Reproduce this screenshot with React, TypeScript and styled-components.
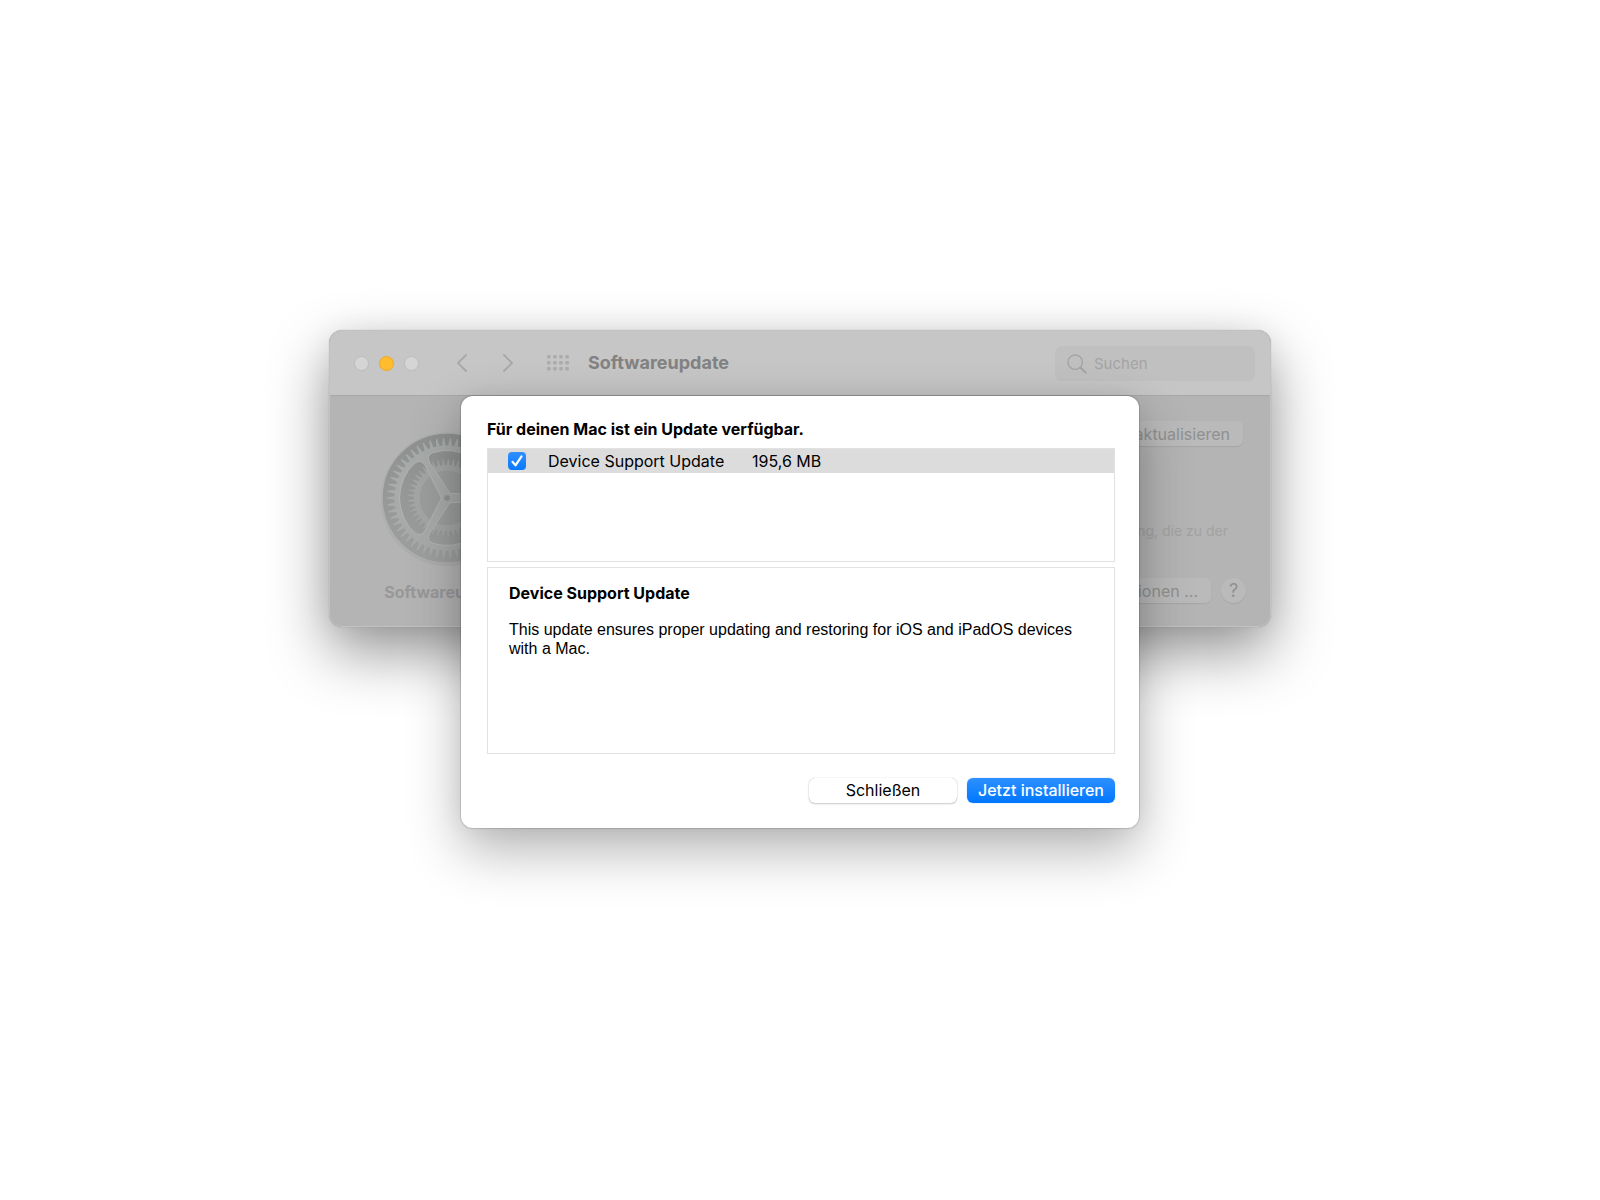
import React, { useState } from 'react';
import styled, { createGlobalStyle, css } from 'styled-components';

const GlobalStyle = createGlobalStyle`
  *, *::before, *::after { box-sizing: border-box; }
  body {
    margin: 0;
    background: #fff;
    color: #000;
    font-family: Inter, Roboto, "Liberation Sans", sans-serif;
    font-size: 16px;
    line-height: 20px;
  }
`;

const Stage = styled.main`
  display: grid;
  grid-template-columns: minmax(0, 942px);
  justify-content: center;
  align-items: start;
  min-height: 100vh;
  padding: 330px 24px 48px;
`;

const Window = styled.section`
  grid-area: 1 / 1;
  display: flex;
  flex-direction: column;
  border-radius: 13px;
  overflow: hidden;
  background: #b4b4b4;
  border: 1px solid #c2c2c2;
  box-shadow: 0 0 1px rgba(0, 0, 0, 0.3), 0 25px 60px rgba(0, 0, 0, 0.42), 0 0 30px rgba(0, 0, 0, 0.06);
`;

const TitleBar = styled.header`
  display: flex;
  align-items: center;
  height: 65px;
  padding: 0 15px 0 24px;
  background: #c6c6c6;
  border-bottom: 1px solid #a8a8a8;
`;

const Lights = styled.div`
  display: flex;
  gap: 10px;
`;

const Light = styled.button<{ $active?: boolean }>`
  width: 15px;
  height: 15px;
  padding: 0;
  border-radius: 50%;
  border: 1px solid ${(p) => (p.$active ? '#eeaa26' : '#bcbcbc')};
  background: ${(p) => (p.$active ? '#ffbc2e' : '#d5d5d5')};
`;

const Navigation = styled.nav`
  display: flex;
  align-items: center;
  gap: 24px;
  margin-left: 32px;
`;

const IconButton = styled.button`
  display: flex;
  align-items: center;
  justify-content: center;
  width: 22px;
  height: 24px;
  padding: 0;
  border: 0;
  background: none;
  color: #a8a8a8;
`;

const GridButton = styled(IconButton)`
  width: 24px;
  margin-left: 27px;
  color: #acacac;
`;

const WindowTitle = styled.h1`
  flex: 1;
  margin: 0 0 0 18px;
  font-size: 18px;
  font-weight: 700;
  line-height: 24px;
  color: #828282;
`;

const SearchField = styled.label`
  display: flex;
  align-items: center;
  gap: 7px;
  width: 200px;
  height: 35px;
  padding: 1px 10px 0 12px;
  border-radius: 7px;
  background: #c0c0c0;
  color: #a4a4a4;
`;

const SearchInput = styled.input`
  flex: 1;
  min-width: 0;
  padding: 0;
  border: 0;
  outline: 0;
  background: none;
  font: inherit;
  font-size: 15px;
  color: #a0a0a0;
  &::placeholder { color: #a4a4a4; opacity: 1; }
`;

const WindowBody = styled.div`
  display: flex;
  justify-content: space-between;
  height: 230px;
  padding: 25px 24px 23px 48px;
`;

const Product = styled.div`
  display: flex;
  flex-direction: column;
  align-items: center;
  gap: 15px;
  height: fit-content;
  padding-top: 8px;
`;

const ProductName = styled.strong`
  font-weight: 700;
  color: #989898;
`;

const Side = styled.div`
  display: flex;
  flex-direction: column;
  align-items: flex-end;
`;

const Note = styled.p`
  margin: 76px 18px auto 0;
  font-size: 14px;
  line-height: 18px;
  color: #a2a2a2;
`;

const SideFooter = styled.div`
  display: flex;
  align-items: center;
  gap: 10px;
`;

const dimmed = css`
  height: 25px;
  border: 0;
  background: #bababa;
  box-shadow: 0 1px 1px rgba(0, 0, 0, 0.08);
  font: inherit;
  color: #909090;
`;

const DimButton = styled.button<{ $inset?: boolean }>`
  ${dimmed}
  padding: 0 13px;
  margin-right: ${(p) => (p.$inset ? 3 : 0)}px;
  border-radius: 6px;
`;

const HelpButton = styled.button`
  ${dimmed}
  width: 25px;
  padding: 0;
  border-radius: 50%;
  font-size: 18px;
`;

const Dialog = styled.section`
  grid-area: 1 / 1;
  z-index: 1;
  justify-self: center;
  display: flex;
  flex-direction: column;
  width: 100%;
  max-width: 678px;
  margin-top: 66px;
  padding: 23px 24px 25px 26px;
  border-radius: 12px;
  background: #fff;
  box-shadow: 0 0 1px 1px rgba(0, 0, 0, 0.14), 0 22px 54px rgba(0, 0, 0, 0.3), 0 0 24px rgba(0, 0, 0, 0.05);
`;

const DialogTitle = styled.h2`
  margin: 0 0 9px;
  font-size: 16px;
  font-weight: 700;
  line-height: 20px;
`;

const Panel = styled.div<{ $height: number }>`
  min-height: ${(p) => p.$height}px;
  border: 1px solid #e2e2e2;
`;

const Updates = styled.div`
  display: flex;
  flex-direction: column;
  gap: 5px;
`;

const UpdateRow = styled.label`
  display: flex;
  align-items: center;
  height: 24px;
  padding-left: 20px;
  background: #dcdcdc;
`;

const Check = styled.span`
  display: grid;
  width: 18px;
  height: 18px;
  > * { grid-area: 1 / 1; }
  > svg { pointer-events: none; }
`;

const CheckInput = styled.input`
  appearance: none;
  width: 18px;
  height: 18px;
  margin: 0;
  border-radius: 4px;
  background: #fff;
  &:checked { background: linear-gradient(#2f8fff, #0a7aff); }
  &:not(:checked) + svg { visibility: hidden; }
`;

const UpdateName = styled.span`
  width: 204px;
  margin-left: 22px;
`;

const Details = styled(Panel)`
  padding: 16px 21px;
  font-family: "Liberation Sans", Arial, sans-serif;
  line-height: 19px;
`;

const DetailsTitle = styled.h3`
  margin: 0 0 17px;
  font-family: Inter, sans-serif;
  font-size: 16px;
  font-weight: 700;
  line-height: 19px;
`;

const DetailsText = styled.p`
  margin: 0;
`;

const Actions = styled.footer`
  display: flex;
  justify-content: flex-end;
  gap: 10px;
  margin-top: 24px;
`;

const ActionButton = styled.button<{ $primary?: boolean }>`
  width: 148px;
  height: 25px;
  padding: 0 0 1px;
  border: 0;
  border-radius: 6px;
  font: inherit;
  background: #fff;
  box-shadow: 0 0 1px rgba(0, 0, 0, 0.3), 0 1px 2px rgba(0, 0, 0, 0.2);
  ${(p) =>
    p.$primary &&
    css`
      color: #fff;
      font-weight: 500;
      background: linear-gradient(#2d90ff, #0077ff);
      box-shadow: 0 0 1px rgba(0, 110, 255, 0.6);
    `}
`;

const point = (radius: number, degrees: number) => {
  const a = (degrees * Math.PI) / 180;
  return `${(radius * Math.cos(a)).toFixed(2)} ${(radius * Math.sin(a)).toFixed(2)}`;
};

const toothedRing = (base: number, tip: number, count: number) => {
  const step = 360 / count;
  const points: string[] = [];
  for (let i = 0; i < count; i++) {
    const a = i * step;
    points.push(
      point(base, a - step * 0.3),
      point(tip, a - step * 0.08),
      point(tip, a + step * 0.08),
      point(base, a + step * 0.3),
    );
  }
  return `M${points.join('L')}Z`;
};

const circle = (r: number) => `M${r} 0A${r} ${r} 0 1 0 ${-r} 0A${r} ${r} 0 1 0 ${r} 0Z`;

// Opening between two spokes, with rounded outer corners.
const opening = (start: number) =>
  `M${point(5.5, start + 60)}L${point(39, start + 4)}Q${point(47.5, start + 3)} ${point(47.5, start + 13)}` +
  `A47.5 47.5 0 0 1 ${point(47.5, start + 107)}Q${point(47.5, start + 117)} ${point(39, start + 116)}Z`;

const frontGear = toothedRing(52.5, 60, 54) + [0, 120, 240].map(opening).join('') + circle(2.5);
const backGear = toothedRing(33, 39, 45) + circle(28);

const Gear = () => (
  <svg width="138" height="138" viewBox="-69 -69 138 138" aria-hidden="true">
    <defs>
      <linearGradient id="disc" x1="0" y1="0" x2="0" y2="1">
        <stop offset="0" stopColor="#8f9191" />
        <stop offset="1" stopColor="#9e9f9f" />
      </linearGradient>
      <linearGradient id="metal" x1="0" y1="0" x2="0" y2="1">
        <stop offset="0" stopColor="#a8abab" />
        <stop offset="1" stopColor="#a8aaaa" />
      </linearGradient>
    </defs>
    <circle cy="2" r="66" fill="#a9a9a9" opacity="0.6" />
    <circle r="65" fill="url(#disc)" stroke="#aeb0b0" strokeWidth="1.5" />
    <path d={backGear} fill="#a4a6a6" fillRule="evenodd" />
    <circle r="28" fill="#9c9e9e" stroke="#aaacac" strokeWidth="0.8" />
    <path d={frontGear} fill="url(#metal)" fillRule="evenodd" />
    <path d={[0, 120, 240].map(opening).join('')} fill="none" stroke="#b4b6b6" strokeWidth="1" />
    <circle r="2.8" fill="#929494" />
  </svg>
);

const Chevron = ({ d }: { d: string }) => (
  <svg width="12" height="19" viewBox="0 0 12 19" fill="none" stroke="currentColor" strokeWidth="1.8" strokeLinecap="round" strokeLinejoin="round" aria-hidden="true">
    <path d={d} />
  </svg>
);

const dots = [0, 1, 2].flatMap((row) => [0, 1, 2, 3].map((column) => ({ row, column })));

export default function App() {
  const [selected, setSelected] = useState(true);
  return (
    <>
      <GlobalStyle />
      <Stage>
        <Window>
          <TitleBar>
            <Lights>
              <Light aria-label="Schließen" />
              <Light $active aria-label="Minimieren" />
              <Light aria-label="Zoomen" />
            </Lights>
            <Navigation>
              <IconButton aria-label="Zurück"><Chevron d="M10 1 2 9l8 8" /></IconButton>
              <IconButton aria-label="Vorwärts"><Chevron d="m2 1 8 8-8 8" /></IconButton>
            </Navigation>
            <GridButton aria-label="Alle anzeigen">
              <svg width="22" height="16" viewBox="0 0 22 16" fill="currentColor" aria-hidden="true">
                {dots.map(({ row, column }) => (
                  <rect key={`${row}-${column}`} x={column * 6.1} y={row * 6} width="3.6" height="3.6" rx="1" />
                ))}
              </svg>
            </GridButton>
            <WindowTitle>Softwareupdate</WindowTitle>
            <SearchField>
              <svg width="20" height="20" viewBox="0 0 20 20" fill="none" stroke="currentColor" strokeLinecap="round" aria-hidden="true">
                <circle cx="8.2" cy="8.2" r="7.2" strokeWidth="1.4" />
                <path d="m13.5 13.5 5.2 5.2" strokeWidth="2" />
              </svg>
              <SearchInput type="search" placeholder="Suchen" aria-label="Suchen" />
            </SearchField>
          </TitleBar>
          <WindowBody>
            <Product>
              <Gear />
              <ProductName>Softwareupdate</ProductName>
            </Product>
            <Side>
              <DimButton $inset>Jetzt aktualisieren</DimButton>
              <Note>Softwarelizenzvereinbarung, die zu der</Note>
              <SideFooter>
                <DimButton>Weitere Optionen ...</DimButton>
                <HelpButton aria-label="Hilfe">?</HelpButton>
              </SideFooter>
            </Side>
          </WindowBody>
        </Window>
        <Dialog role="dialog" aria-labelledby="update-title">
          <DialogTitle id="update-title">Für deinen Mac ist ein Update verfügbar.</DialogTitle>
          <Updates>
            <Panel $height={114}>
              <UpdateRow>
                <Check>
                  <CheckInput type="checkbox" checked={selected} onChange={(e) => setSelected(e.target.checked)} />
                  <svg width="18" height="18" viewBox="0 0 18 18" fill="none" stroke="#fff" strokeWidth="2.2" strokeLinecap="round" strokeLinejoin="round" aria-hidden="true">
                    <path d="m4.5 9.8 3 3.6 6-9" />
                  </svg>
                </Check>
                <UpdateName>Device Support Update</UpdateName>
                <span>195,6 MB</span>
              </UpdateRow>
            </Panel>
            <Details $height={187}>
              <DetailsTitle>Device Support Update</DetailsTitle>
              <DetailsText>
                This update ensures proper updating and restoring for iOS and iPadOS devices with a Mac.
              </DetailsText>
            </Details>
          </Updates>
          <Actions>
            <ActionButton>Schließen</ActionButton>
            <ActionButton $primary>Jetzt installieren</ActionButton>
          </Actions>
        </Dialog>
      </Stage>
    </>
  );
}
